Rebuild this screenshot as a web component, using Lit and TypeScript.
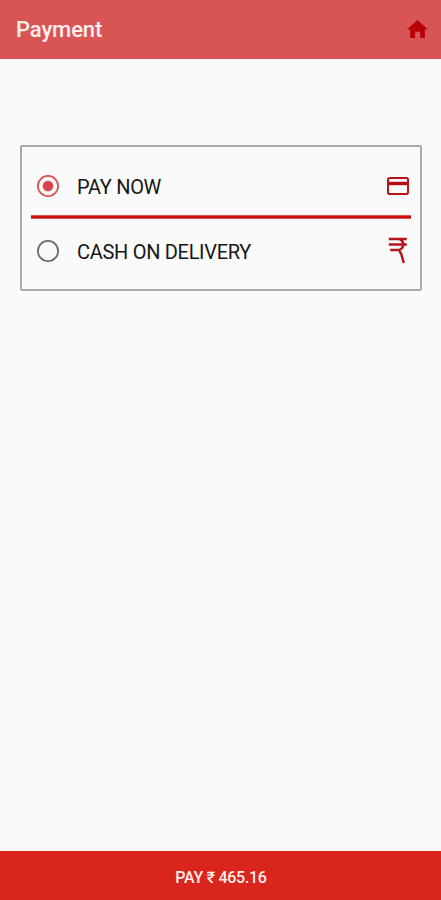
import { LitElement, html, css, svg } from "lit";
import { customElement, state } from "lit/decorators.js";

const homeIcon = svg`<path fill="#b90005" d="M9.8 17v-6h4.8v6H19V9h3L12 0 2 9h3v8z"/>`;

@customElement("app-root")
export class AppRoot extends LitElement {
  @state() private method = "now";

  static styles = css`
    :host {
      display: flex;
      flex-direction: column;
      box-sizing: border-box;
      height: 900px;
      background: #fafafa;
      font-family: Roboto, sans-serif;
      color: #161616;
    }
    header {
      display: flex;
      align-items: center;
      justify-content: space-between;
      box-sizing: border-box;
      height: 60px;
      padding: 0 13px 1px 16px;
      background: #d95455;
      border-bottom: 1px solid #fff;
    }
    h1 {
      margin: 0;
      padding-top: 2px;
      font-size: 22px;
      line-height: 26px;
      font-weight: 500;
      letter-spacing: -0.1px;
      color: #fff0ef;
    }
    svg {
      display: block;
      flex: none;
    }
    main {
      flex: 1;
      padding: 85px 19px 0 20px;
    }
    .options {
      box-sizing: border-box;
      height: 146px;
      padding: 8px 9px 0;
      border: 2px solid #a9a9a9;
      border-radius: 2px;
    }
    .option {
      display: flex;
      align-items: center;
      height: 63px;
      padding: 0 2px 0 6px;
      font-size: 20px;
      letter-spacing: -0.3px;
      cursor: pointer;
    }
    .first {
      box-sizing: border-box;
      height: 60px;
      padding-top: 1px;
    }
    .label {
      flex: 1;
      padding: 2px 0 0 18px;
    }
    .rule {
      height: 4px;
      margin: 0;
      background: linear-gradient(#d85050 0 1px, #cb0e0e 1px 3px, #d85050 3px);
    }
    .pay {
      display: flex;
      align-items: center;
      justify-content: center;
      height: 49px;
      padding: 3px 0 0 1px;
      box-sizing: border-box;
      border: 0;
      background: #da251c;
      color: #fff0ee;
      font: 500 16px Roboto, sans-serif;
      letter-spacing: -0.28px;
    }
  `;

  private radio(on: boolean) {
    return html`<svg width="22" height="22" viewBox="0 0 22 22">
      <circle cx="11" cy="11" r="10.1" fill="none" stroke=${on ? "#d95455" : "#6d6d6d"} stroke-width="1.8" />
      ${on ? svg`<circle cx="11" cy="11" r="5.3" fill="#d9444a" />` : ""}
    </svg>`;
  }

  render() {
    return html`
      <header>
        <h1>Payment</h1>
        <svg width="21" height="18" viewBox="2 0 20 17" preserveAspectRatio="none">${homeIcon}</svg>
      </header>
      <main>
        <div class="options">
          <div class="option first" @click=${() => (this.method = "now")}>
            ${this.radio(this.method === "now")}
            <span class="label">PAY NOW</span>
            <svg width="22" height="18" viewBox="0 0 22 18">
              <rect x="1" y="1" width="20" height="16" rx="1.8" fill="none" stroke="#b9141a" stroke-width="2" />
              <path d="M1 6.5h20" stroke="#b9090e" stroke-width="3.4" />
            </svg>
          </div>
          <div class="rule"></div>
          <div class="option" @click=${() => (this.method = "cod")}>
            ${this.radio(this.method === "cod")}
            <span class="label">CASH ON DELIVERY</span>
            <svg width="22" height="28" viewBox="0 0 22 28">
              <path
                d="M1.8 2h18M1.8 7.5h18M3.2 12.9h9M12 2C16.3 3.1 17.5 8.1 15 11Q13.8 12.6 12 12.9L14.4 17.5L16.7 26"
                fill="none" stroke="#b9141a" stroke-width="2.5"
              />
            </svg>
          </div>
        </div>
      </main>
      <button class="pay">PAY ₹ 465.16</button>
    `;
  }
}
